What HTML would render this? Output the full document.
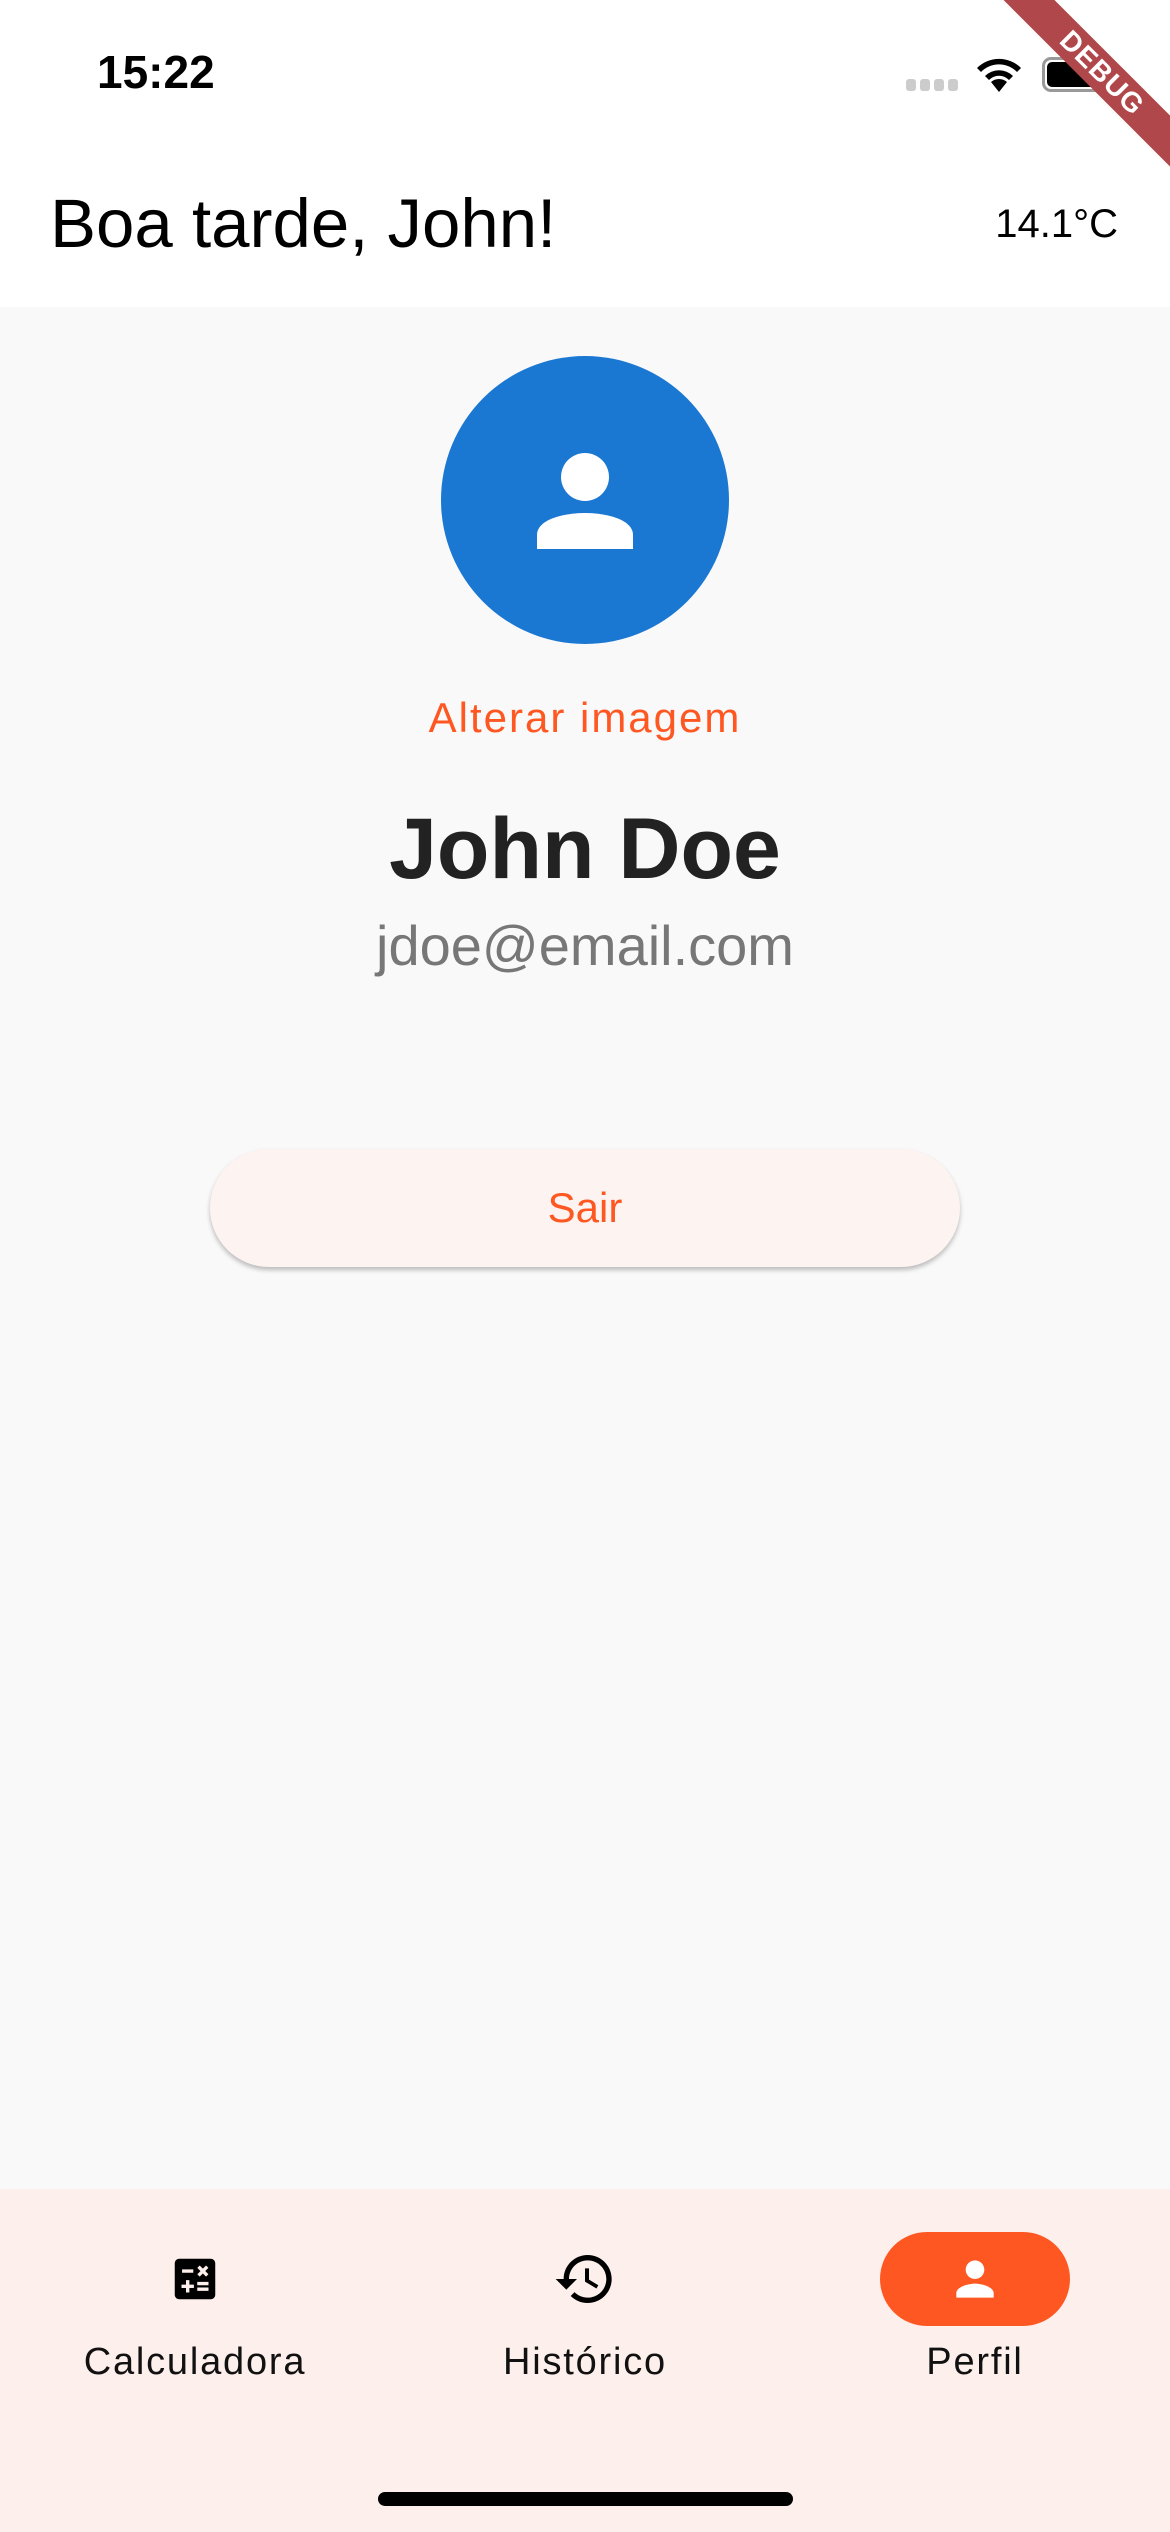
<!DOCTYPE html>
<html><head><meta charset="utf-8"><style>
*{margin:0;padding:0;box-sizing:border-box}
body{width:1170px;height:2532px;background:#f9f9f9;font-family:"Liberation Sans",sans-serif;position:relative;overflow:hidden}
.abs{position:absolute}
</style></head><body>
<div class="abs" style="left:0;top:0;width:1170px;height:307px;background:#fff"></div>
<div class="abs" style="left:97px;top:45px;font-size:46px;font-weight:bold;color:#000">15:22</div>
<div class="abs" style="left:906px;top:79px;width:54px;height:12px">
<span class="abs" style="left:0;width:10px;height:12px;background:#ccc;border-radius:3px"></span>
<span class="abs" style="left:14px;width:10px;height:12px;background:#ccc;border-radius:3px"></span>
<span class="abs" style="left:28px;width:10px;height:12px;background:#ccc;border-radius:3px"></span>
<span class="abs" style="left:42px;width:10px;height:12px;background:#ccc;border-radius:3px"></span>
</div>
<svg class="abs" style="left:973px;top:54px" width="52" height="38" viewBox="0 0 52 38"><path d="M26 38 L18 28 A12 12 0 0 1 34 28 Z M12 22 A20 20 0 0 1 40 22 L36 26 A14 14 0 0 0 16 26Z M4 14 A31 31 0 0 1 48 14 L44 18 A25 25 0 0 0 8 18Z" fill="#000"/></svg>
<div class="abs" style="left:1042px;top:57px;width:62px;height:35px;border:3px solid #999;border-radius:9px"></div>
<div class="abs" style="left:1047px;top:62px;width:52px;height:25px;background:#000;border-radius:5px"></div>
<div class="abs" style="left:942px;top:55px;width:320px;height:36px;background:#b0474a;transform:rotate(45deg);color:#fff;font-weight:bold;font-size:28px;text-align:center;line-height:36px;letter-spacing:1px">DEBUG</div>
<div class="abs" style="left:50px;top:184px;font-size:69px;color:#000">Boa tarde, John!</div>
<div class="abs" style="right:52px;top:202px;font-size:40px;color:#000">14.1°C</div>
<div class="abs" style="left:441px;top:356px;width:288px;height:288px;border-radius:50%;background:#1b78d2"></div>
<svg class="abs" style="left:537px;top:453px" width="96" height="96" viewBox="0 0 96 96"><circle cx="48" cy="24" r="24" fill="#fff"/><path d="M0 96 V82 C0 66 28 60 48 60 C68 60 96 66 96 82 V96Z" fill="#fff"/></svg>
<div class="abs" style="left:0;width:1170px;top:694px;text-align:center;font-size:42px;color:#ff5722;letter-spacing:2px">Alterar imagem</div>
<div class="abs" style="left:0;width:1170px;top:800px;text-align:center;font-size:86px;font-weight:bold;color:#222">John Doe</div>
<div class="abs" style="left:0;width:1170px;top:913px;text-align:center;font-size:56px;color:#777">jdoe@email.com</div>
<div class="abs" style="left:210px;top:1149px;width:750px;height:118px;border-radius:59px;background:#fdf3f0;box-shadow:0 3px 5px rgba(0,0,0,0.25);text-align:center;line-height:118px;font-size:42px;color:#ff5722">Sair</div>
<div class="abs" style="left:0;top:2189px;width:1170px;height:343px;background:#fdefeb"></div>
<svg class="abs" style="left:168px;top:2252px" width="54" height="54" viewBox="0 0 24 24"><path d="M19 3H5c-1.1 0-2 .9-2 2v14c0 1.1.9 2 2 2h14c1.1 0 2-.9 2-2V5c0-1.1-.9-2-2-2zm-5.970 4.06L14.09 6l1.41 1.41L16.91 6l1.06 1.06-1.41 1.41 1.41 1.41-1.06 1.06-1.41-1.4-1.41 1.41-1.06-1.06 1.41-1.41-1.41-1.42zm-6.78.66h5v1.5h-5v-1.5zM11.5 16h-2v2H8v-2H6v-1.5h2v-2h1.5v2h2V16zm6.5 1.25h-5v-1.5h5v1.5zm0-2.5h-5v-1.5h5v1.5z" fill="#000"/></svg>
<svg class="abs" style="left:553px;top:2247px" width="64" height="64" viewBox="0 0 24 24"><path d="M13 3c-4.97 0-9 4.030-9 9H1l3.89 3.89.07.14L9 12H6c0-3.87 3.13-7 7-7s7 3.13 7 7-3.13 7-7 7c-1.93 0-3.68-.79-4.94-2.06l-1.42 1.42C8.27 19.99 10.51 21 13 21c4.97 0 9-4.03 9-9s-4.03-9-9-9zm-1 5v5l4.28 2.54.72-1.21-3.5-2.08V8H12z" fill="#000"/></svg>
<div class="abs" style="left:880px;top:2232px;width:190px;height:94px;border-radius:47px;background:#ff5722"></div>
<svg class="abs" style="left:947px;top:2251px" width="56" height="56" viewBox="0 0 24 24"><path d="M12 12c2.21 0 4-1.79 4-4s-1.79-4-4-4-4 1.790-4 4 1.79 4 4 4zm0 2c-2.67 0-8 1.34-8 4v2h16v-2c0-2.66-5.33-4-8-4z" fill="#fff"/></svg>
<div class="abs" style="left:45px;width:300px;top:2341px;text-align:center;font-size:38px;color:#111;letter-spacing:1.8px">Calculadora</div>
<div class="abs" style="left:435px;width:300px;top:2341px;text-align:center;font-size:38px;color:#111;letter-spacing:1.8px">Histórico</div>
<div class="abs" style="left:825px;width:300px;top:2341px;text-align:center;font-size:38px;color:#111;letter-spacing:1.8px">Perfil</div>
<div class="abs" style="left:378px;top:2492px;width:415px;height:14px;border-radius:7px;background:#000"></div>
</body></html>
